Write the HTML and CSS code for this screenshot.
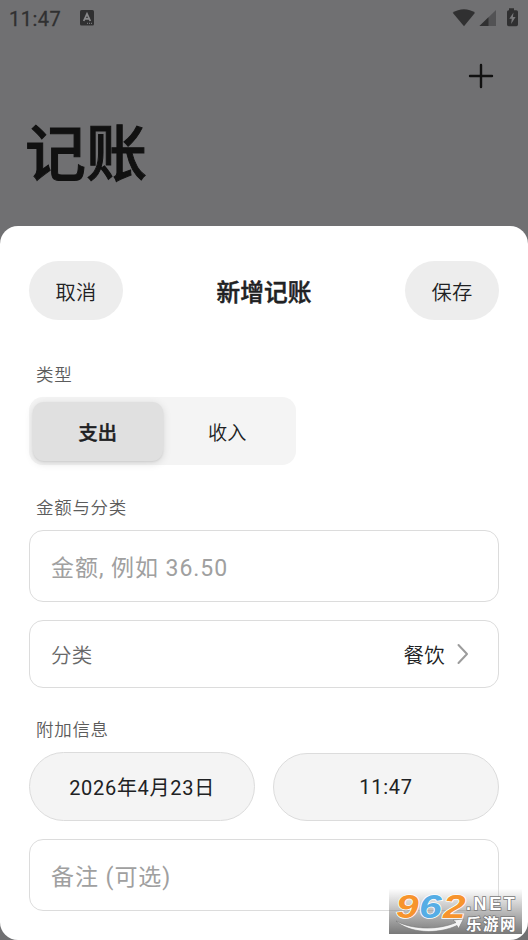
FILE: index.html
```html
<!DOCTYPE html>
<html lang="zh-CN">
<head>
<meta charset="utf-8">
<title>记账</title>
<link rel="stylesheet" href="styles.css">
</head>
<body>
<div class="screen">
  <header class="status">
    <span class="clock">11:47</span>
    <svg class="app-badge" width="14" height="16" viewBox="0 0 14 16"><rect width="14" height="15.5" rx="1.6" fill="#303031"/><path d="M3.7 11 7 3.8 10.3 11M5 8.8h4" fill="none" stroke="#88888a" stroke-width="1.8"/><path d="M7 13.3h1M9 13.3h1M11 13.3h1" stroke="#88888a"/></svg>
    <svg class="signals" width="68" height="22" viewBox="0 0 68 22"><path d="M.7 5.8C7 1 17 1 23 5.800L12 19.300Z" fill="#303031"/><path d="M44 3v16H27.500Z" fill="#525254"/><path d="M36.500 10.300V19h-9Z" fill="#303031"/><path d="M57 1.200h5v2h2.300q1.700 0 1.700 1.600v12.700q0 1.700-1.700 1.700h-7.600q-1.700 0-1.700-1.700V4.800q0-1.600 1.700-1.600H57Z" fill="#303031"/><path d="m61.500 5.500-4.200 6.300h2.500l-.7 5.200 4.500-7h-2.700Z" fill="#777779"/></svg>
  </header>
  <div class="toolbar">
    <svg width="26" height="26" viewBox="0 0 26 26"><path d="M13 2v22M2 13h22" stroke="#111" stroke-width="2.4" stroke-linecap="round"/></svg>
  </div>
  <h1 class="page-title">记账</h1>

  <main class="sheet">
    <div class="sheet-head">
      <button class="pill">取消</button>
      <h2 class="sheet-title">新增记账</h2>
      <button class="pill">保存</button>
    </div>
    <div class="label label-type">类型</div>
    <div class="segment">
      <div class="option selected">支出</div>
      <div class="option">收入</div>
    </div>
    <div class="label label-amount">金额与分类</div>
    <div class="field">金额, 例如 36.50</div>
    <div class="field category">
      <span class="category-name">分类</span>
      <span class="category-value">餐饮</span>
      <svg class="chevron" width="14" height="22" viewBox="0 0 14 22"><path d="m2.500 2 8.500 9-8.500 9" fill="none" stroke="#9c9c9c" stroke-width="2" stroke-linecap="round" stroke-linejoin="round"/></svg>
    </div>
    <div class="label label-extra">附加信息</div>
    <div class="when">
      <div class="chip">2026年4月23日</div>
      <div class="chip time">11:47</div>
    </div>
    <div class="field note">备注 (可选)</div>
  </main>

  <div class="watermark">
    <svg class="swoosh" width="133" height="45" viewBox="0 0 133 45">
      <path d="M7 32C22 40 47 42 67 33.500l-3-2.500 10.500-1-5 9.500-1.500-3C48 46 20 44 7 32Z" fill="#f4f4f4" stroke="#777" stroke-width=".6"/>
    </svg>
    <div class="digits"><span class="orange">9</span><span class="blue">6</span><span class="orange">2</span></div>
    <div class="names">
      <div class="domain">.NET</div>
      <div class="site">乐游网</div>
    </div>
  </div>
</div>
</body>
</html>
```

FILE: styles.css
```css
* { box-sizing: border-box; }
body { margin: 0; background: #707072; font-family: Roboto, "Noto Sans CJK SC", sans-serif; color: #202123; }
.screen { position: relative; width: 528px; height: 940px; overflow: hidden; display: flex; flex-direction: column; background: #707072; }
.status { height: 36px; flex: none; display: flex; align-items: center; padding: 0 8px 0 9px; }
.clock { font-size: 20px; line-height: 36px; letter-spacing: .5px; color: #303031; -webkit-text-stroke: .3px #303031; width: 71px; padding-top: 1px; }
.app-badge { margin-top: -1px; }
.signals { margin-left: auto; margin-top: -1px; }
.toolbar { height: 78px; flex: none; display: flex; justify-content: flex-end; padding: 27px 34px 0 0; }
.page-title { margin: 0; height: 112px; flex: none; padding: 1px 0 0 25px; font-size: 61px; line-height: 80px; font-weight: 500; color: #111; -webkit-text-stroke: 1px #111; }
.sheet { height: 714px; flex: none; background: #fff; border-radius: 18px; padding: 35px 29px 0; }
.sheet-head { display: flex; justify-content: space-between; align-items: flex-start; height: 60px; }
.pill { width: 94px; height: 59px; border: 0; border-radius: 30px; padding: 5px 0 0; background: #ededed; color: #202123; font-family: inherit; font-weight: 350; font-size: 20.300px; line-height: 54px; letter-spacing: .2px; }
.sheet-title { margin: 0; padding-top: 15px; font-size: 23.700px; line-height: 34px; font-weight: 500; -webkit-text-stroke: .5px #202123; }
.label { padding-left: 7px; font-size: 17.500px; line-height: 24px; letter-spacing: .7px; font-weight: 350; color: #5c5c5c; }
.label-type { margin-top: 42px; }
.segment { display: grid; grid-template-columns: 1fr 1fr; width: 267px; height: 68px; margin-top: 10px; border-radius: 14px; background: #f4f4f4; padding: 5px 4px 4px; }
.option { display: flex; align-items: center; justify-content: center; border-radius: 11px; font-size: 19.200px; font-weight: 350; }
.selected { background: #e0e0e0; font-weight: 500; -webkit-text-stroke: .4px #202123; box-shadow: 0 2px 8px rgba(0, 0, 0, .13), 0 1px 2px rgba(0, 0, 0, .08); }
.label-amount { margin-top: 31px; }
.field { height: 72px; margin-top: 10px; border: 1px solid #dcdcdc; border-radius: 14px; padding: 0 21px; display: flex; align-items: center; font-size: 23px; letter-spacing: .95px; color: #a0a0a0; }
.category { height: 68px; margin-top: 18px; font-size: 20.500px; font-weight: 350; letter-spacing: .2px; }
.category-name { color: #686868; }
.category-value { color: #202123; margin-left: auto; }
.chevron { margin: 0 7px 0 11px; }
.label-extra { margin-top: 30px; }
.when { display: grid; grid-template-columns: 1fr 1fr; gap: 18px; margin-top: 10px; height: 70px; }
.chip { height: 69px; border: 1px solid #dcdcdc; border-radius: 35px; background: #f4f4f4; display: flex; align-items: center; justify-content: center; font-size: 20px; letter-spacing: .7px; }
.time { height: 68px; margin-top: 1px; }
.note { margin-top: 17px; }
.watermark { position: absolute; left: 389px; top: 889px; width: 133px; height: 45px; display: flex; padding-left: 7px; background: linear-gradient(rgba(238, 238, 238, .1), rgba(118, 118, 118, .98)); }
.swoosh { position: absolute; left: 0; top: 0; }
.digits { position: relative; display: flex; width: 70px; font: italic 700 34px/34px "Liberation Sans", sans-serif; -webkit-text-stroke: 1.500px #fff; paint-order: stroke fill; }
.digits span { display: block; width: 19px; height: 34px; transform: scaleX(1.200); transform-origin: left; margin-right: 4.500px; }
.orange { color: #f7942d; }
.blue { color: #55ade5; }
.names { position: relative; padding-top: 5px; color: #fff; -webkit-text-stroke: 1.500px #777; paint-order: stroke fill; }
.domain { height: 20px; font: 700 18px/20px "Liberation Sans", sans-serif; letter-spacing: 2.600px; }
.site { height: 18px; font: 700 15.500px/19px "Noto Sans CJK SC", sans-serif; letter-spacing: 1.500px; }
```
